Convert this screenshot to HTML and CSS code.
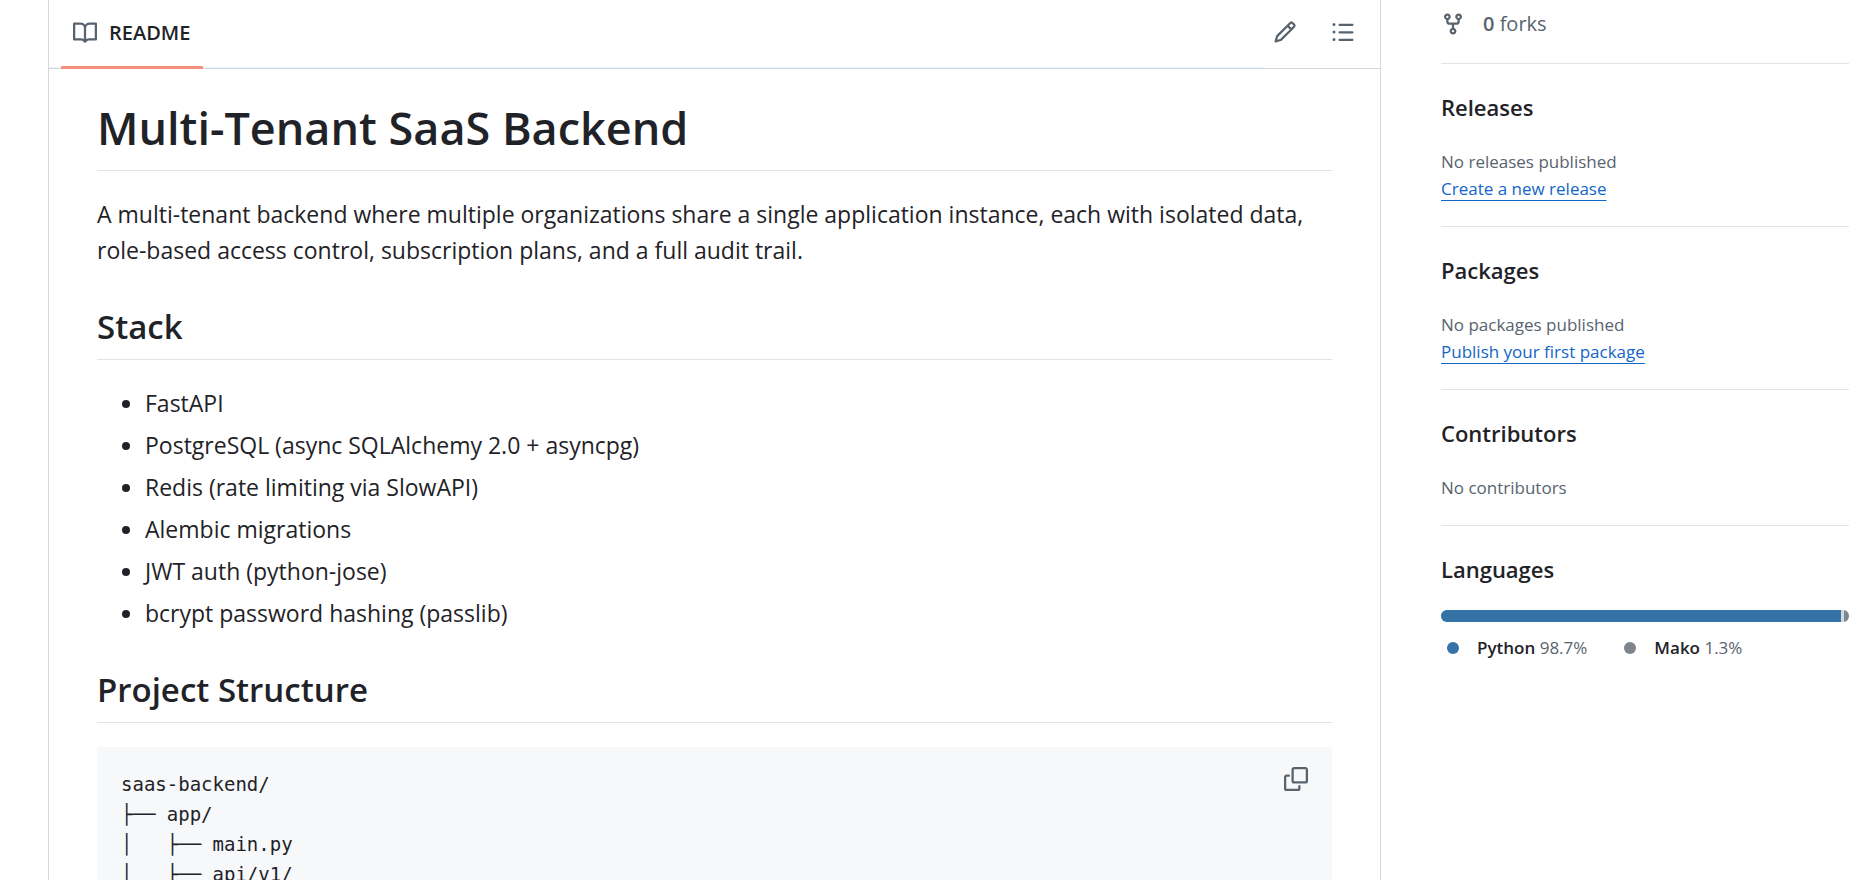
FILE: index.html
```html
<!DOCTYPE html>
<html lang="en">
<head>
<meta charset="utf-8">
<title>Multi-Tenant SaaS Backend</title>
<link rel="stylesheet" href="styles.css">
</head>
<body>
<div class="page">
  <main class="readme">
    <header class="readme-header">
      <nav class="tabs" aria-label="Repository files">
        <a class="tab tab-active" href="#readme">
          <svg class="icon" viewBox="0 0 16 16" aria-hidden="true"><path d="M0 1.75A.75.75 0 0 1 .75 1h4.253c1.227 0 2.317.59 3 1.501A3.743 3.743 0 0 1 11.006 1h4.245a.75.75 0 0 1 .75.75v10.5a.75.75 0 0 1-.75.75h-4.507a2.25 2.25 0 0 0-1.591.659l-.622.621a.75.75 0 0 1-1.06 0l-.622-.621A2.25 2.25 0 0 0 5.258 13H.75a.75.75 0 0 1-.75-.75Zm7.251 10.324.004-5.073-.002-2.253A2.25 2.25 0 0 0 5.003 2.5H1.5v9h3.757a3.75 3.75 0 0 1 1.994.574ZM8.755 4.75l-.004 7.322a3.752 3.752 0 0 1 1.992-.572H14.5v-9h-3.495a2.25 2.25 0 0 0-2.25 2.25Z"/></svg>
          <span>README</span>
        </a>
      </nav>
      <div class="actions">
        <button class="icon-button" type="button" aria-label="Edit file">
          <svg class="icon" viewBox="0 0 16 16" aria-hidden="true"><path d="M11.013 1.427a1.75 1.75 0 0 1 2.474 0l1.086 1.086a1.75 1.75 0 0 1 0 2.474l-8.61 8.61c-.21.21-.47.364-.756.445l-3.251.93a.75.75 0 0 1-.927-.928l.929-3.25c.081-.286.235-.547.445-.758l8.61-8.61Zm.176 4.823L9.75 4.81l-6.286 6.287a.253.253 0 0 0-.064.108l-.558 1.953 1.953-.558a.253.253 0 0 0 .108-.064Zm1.238-3.763a.25.25 0 0 0-.354 0L10.811 3.75l1.439 1.44 1.263-1.263a.25.25 0 0 0 0-.354Z"/></svg>
        </button>
        <button class="icon-button" type="button" aria-label="Outline">
          <svg class="icon" viewBox="0 0 16 16" aria-hidden="true"><path d="M5.75 2.5h8.5a.75.75 0 0 1 0 1.5h-8.5a.75.75 0 0 1 0-1.5Zm0 5h8.5a.75.75 0 0 1 0 1.5h-8.5a.75.75 0 0 1 0-1.5Zm0 5h8.5a.75.75 0 0 1 0 1.5h-8.5a.75.75 0 0 1 0-1.5ZM2 14a1 1 0 1 1 0-2 1 1 0 0 1 0 2Zm1-6a1 1 0 1 1-2 0 1 1 0 0 1 2 0ZM2 4a1 1 0 1 1 0-2 1 1 0 0 1 0 2Z"/></svg>
        </button>
      </div>
    </header>
    <article class="markdown" id="readme">
      <h1>Multi-Tenant SaaS Backend</h1>
      <p>A multi-tenant backend where multiple organizations share a single application instance, each with isolated data, role-based access control, subscription plans, and a full audit trail.</p>
      <h2>Stack</h2>
      <ul>
        <li>FastAPI</li>
        <li>PostgreSQL (async SQLAlchemy 2.0 + asyncpg)</li>
        <li>Redis (rate limiting via SlowAPI)</li>
        <li>Alembic migrations</li>
        <li>JWT auth (python-jose)</li>
        <li>bcrypt password hashing (passlib)</li>
      </ul>
      <h2>Project Structure</h2>
      <div class="code-block">
        <pre><code>saas-backend/
├── app/
│   ├── main.py
│   ├── api/v1/</code></pre>
        <button class="icon-button" type="button" aria-label="Copy">
          <svg class="icon" viewBox="0 0 16 16" aria-hidden="true"><path d="M0 6.75C0 5.784.784 5 1.75 5h1.5a.75.75 0 0 1 0 1.5h-1.5a.25.25 0 0 0-.25.25v7.5c0 .138.112.25.25.25h7.5a.25.25 0 0 0 .25-.25v-1.5a.75.75 0 0 1 1.5 0v1.5A1.75 1.75 0 0 1 9.25 16h-7.5A1.75 1.75 0 0 1 0 14.25Z"/><path d="M5 1.75C5 .784 5.784 0 6.75 0h7.5C15.216 0 16 .784 16 1.75v7.5A1.75 1.75 0 0 1 14.25 11h-7.5A1.75 1.75 0 0 1 5 9.25Zm1.75-.25a.25.25 0 0 0-.25.25v7.5c0 .138.112.25.25.25h7.5a.25.25 0 0 0 .25-.25v-7.5a.25.25 0 0 0-.25-.25Z"/></svg>
        </button>
      </div>
    </article>
  </main>
  <aside class="sidebar">
    <section class="forks">
      <a class="forks-link" href="#forks">
        <svg class="icon" viewBox="0 0 16 16" aria-hidden="true"><path d="M5 5.372v.878c0 .414.336.75.75.75h4.5a.75.75 0 0 0 .75-.75v-.878a2.25 2.25 0 1 1 1.5 0v.878a2.25 2.25 0 0 1-2.25 2.25h-1.5v2.128a2.251 2.251 0 1 1-1.5 0V8.5h-1.5A2.25 2.25 0 0 1 3.5 6.25v-.878a2.25 2.25 0 1 1 1.5 0ZM5 3.25a.75.75 0 1 0-1.5 0 .75.75 0 0 0 1.5 0Zm6.75.75a.75.75 0 1 0 0-1.5.75.75 0 0 0 0 1.5Zm-3 8.75a.75.75 0 1 0-1.5 0 .75.75 0 0 0 1.5 0Z"/></svg>
        <span><strong>0</strong> forks</span>
      </a>
    </section>
    <section class="panel">
      <h2>Releases</h2>
      <p>No releases published</p>
      <a class="link" href="#new-release">Create a new release</a>
    </section>
    <section class="panel">
      <h2>Packages</h2>
      <p>No packages published</p>
      <a class="link" href="#packages">Publish your first package</a>
    </section>
    <section class="panel">
      <h2>Contributors</h2>
      <p>No contributors</p>
    </section>
    <section class="panel">
      <h2>Languages</h2>
      <div class="bar">
        <span class="python" style="width: 98.7%"></span>
        <span class="mako" style="width: 1.3%"></span>
      </div>
      <ul class="legend">
        <li><span class="dot python"></span><span><strong>Python</strong> 98.7%</span></li>
        <li><span class="dot mako"></span><span><strong>Mako</strong> 1.3%</span></li>
      </ul>
    </section>
  </aside>
</div>
</body>
</html>
```
FILE: styles.css
```css
* {
  box-sizing: border-box;
}

body {
  margin: 0;
  color: #1f2328;
  background: #fff;
  font: 23px/36px "Open Sans", "Noto Sans", sans-serif;
}

h1, h2, p, ul, pre {
  margin: 0;
}

strong {
  font-weight: 600;
}

.page {
  display: grid;
  grid-template-columns: minmax(0, 1fr) 408px;
  gap: 60px;
  height: 100vh;
  padding: 0 27px 0 48px;
  overflow: hidden;
}

.icon {
  display: block;
  flex: none;
  width: 24px;
  height: 24px;
  fill: #59636e;
}

.icon-button {
  padding: 9px;
  border: 0;
  background: none;
  cursor: pointer;
}

/* README column */
.readme {
  border: solid #d1d9e0;
  border-width: 0 1px;
}

.readme-header {
  display: flex;
  height: 69px;
  border-bottom: 1px solid #d1d9e0;
}

.tabs {
  display: flex;
  flex: 1;
  padding-left: 12px;
  border-bottom: 1px solid #eff2f5;
}

.tab {
  position: relative;
  display: flex;
  gap: 12px;
  align-items: center;
  padding: 0 13px 2px 12px;
  color: #1f2328;
  font-size: 20px;
  font-weight: 600;
  text-decoration: none;
}

.tab-active::after {
  position: absolute;
  right: 0;
  bottom: -2px;
  left: 0;
  height: 3px;
  background: #f38f7c;
  content: "";
}

.actions {
  display: flex;
  gap: 16px;
  align-items: center;
  padding: 0 16px 4px 0;
}

.markdown {
  padding: 28px 48px 48px;
}

.markdown h1,
.markdown h2 {
  border-bottom: 1px solid #d1d9e0b3;
  font-weight: 600;
}

.markdown h1 {
  margin-bottom: 24px;
  padding-bottom: 11px;
  font-size: 45px;
  line-height: 62px;
}

.markdown h2 {
  margin: 35px 0 24px;
  padding-bottom: 9px;
  font-size: 33px;
  line-height: 47px;
}

.markdown p,
.markdown ul {
  padding-top: 1px;
}

.markdown ul {
  display: grid;
  gap: 6px;
  padding-left: 48px;
}

.code-block {
  display: flex;
  justify-content: space-between;
  align-items: flex-start;
  padding: 11px 15px 24px 24px;
  background: #f6f8fa;
}

.code-block pre {
  padding-top: 11px;
}

.code-block code {
  display: block;
  font: 19px/30px "DejaVu Sans Mono", "Liberation Mono", monospace;
}

/* Sidebar */
.sidebar {
  color: #59636e;
  font-size: 17px;
  line-height: 27px;
}

.forks {
  padding: 8px 0 24px;
}

.forks-link {
  display: flex;
  gap: 18px;
  align-items: center;
  color: #59636e;
  font-size: 20px;
  line-height: 31px;
  text-decoration: none;
}

.panel {
  padding: 24px 0;
  border-top: 1px solid #d1d9e0b3;
}

.panel h2 {
  margin-bottom: 22px;
  color: #1f2328;
  font-size: 22px;
  font-weight: 600;
  line-height: 38px;
}

.link {
  color: #1465c8;
  text-decoration-thickness: 1px;
  text-underline-offset: 5px;
}

.bar {
  display: flex;
  gap: 3px;
  height: 12px;
  overflow: hidden;
  border-radius: 6px;
  background: #d1d9e0;
}

.python {
  background: #3572a5;
}

.mako {
  background: #7e858d;
}

.legend {
  display: flex;
  gap: 37px;
  padding: 12px 0 0 6px;
  list-style: none;
}

.legend li {
  display: flex;
  gap: 18px;
  align-items: center;
}

.legend strong {
  color: #1f2328;
}

.dot {
  width: 12px;
  height: 12px;
  border-radius: 50%;
}
```
